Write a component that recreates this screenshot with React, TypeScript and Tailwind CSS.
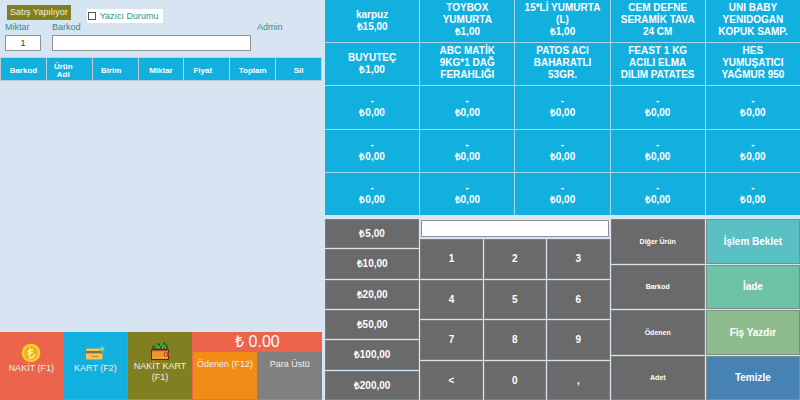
import React, { useState } from "react";

const products: string[][] = [
  ["karpuz", "₺15,00"],
  ["TOYBOX", "YUMURTA", "₺1,00"],
  ["15*Lİ YUMURTA", "(L)", "₺1,00"],
  ["CEM DEFNE", "SERAMİK TAVA", "24 CM"],
  ["UNI BABY", "YENIDOGAN", "KOPUK SAMP."],
  ["BUYUTEÇ", "₺1,00"],
  ["ABC MATİK", "9KG*1 DAĞ", "FERAHLIĞI"],
  ["PATOS ACI", "BAHARATLI", "53GR."],
  ["FEAST 1 KG", "ACILI ELMA", "DILIM PATATES"],
  ["HES", "YUMUŞATICI", "YAĞMUR 950"],
  ...Array.from({ length: 15 }, () => ["-", "₺0,00"]),
];

const notes = ["₺5,00", "₺10,00", "₺20,00", "₺50,00", "₺100,00", "₺200,00"];
const keys = ["1", "2", "3", "4", "5", "6", "7", "8", "9", "<", "0", ","];
const modes = ["Diğer Ürün", "Barkod", "Ödenen", "Adet"];
const actions = [
  { label: "İşlem Beklet", color: "bg-[#5bc0c4]" },
  { label: "İade", color: "bg-[#6fc2a6]" },
  { label: "Fiş Yazdır", color: "bg-[#8fbc8f]" },
  { label: "Temizle", color: "bg-[#4682b4]" },
];
const columns = [
  { name: "Barkod", pad: "px-0" },
  { name: "Ürün Adi", pad: "pl-1 pr-4" },
  { name: "Birim", pad: "pl-1 pr-3" },
  { name: "Miktar", pad: "px-0" },
  { name: "Fiyat", pad: "pl-1 pr-3" },
  { name: "Toplam", pad: "px-0" },
  { name: "Sil", pad: "px-0" },
];

function CoinIcon() {
  return (
    <svg viewBox="0 0 20 20" className="h-5 w-5" aria-hidden="true">
      <circle cx="10" cy="10" r="9.5" fill="#f2a91e" />
      <circle cx="10" cy="9.8" r="8.9" fill="#ffcf33" />
      <circle cx="10" cy="10" r="7" fill="#eeb01c" />
      <path d="M8.7 4.7v10c3.2.2 4.9-1.5 5-4.1M6.3 9l5.6-2.5M6.3 11.6l5.6-2.5" fill="none" stroke="#fff0a8" strokeWidth="1.4" />
    </svg>
  );
}

function CardIcon() {
  return (
    <svg viewBox="0 0 20 14" className="h-[14px] w-5" aria-hidden="true">
      <rect x="1" y="2.5" width="16.5" height="11" rx="1.2" fill="#fbc04d" />
      <path d="M1 5h16.5v2.3H1z" fill="#7a6f55" />
      <path d="M7.5 10.5h6" stroke="#a77b34" strokeWidth="1" strokeDasharray="1.4 .5" />
      <circle cx="17" cy="2.9" r="2.6" fill="#5cc6ad" />
      <path d="M15.7 3l1 1 1.7-2" fill="none" stroke="#e8fff8" strokeWidth=".7" />
    </svg>
  );
}

function WalletIcon() {
  return (
    <svg viewBox="0 0 20 20" className="h-5 w-5" aria-hidden="true">
      <path d="M3 9L2 5l4-1 1-2 4 1 3-2 4 4-1 4z" fill="#24541f" />
      <path d="M4 7l3-3 2 3 3-5 2 4 2-2" fill="none" stroke="#4fa53c" strokeWidth="1.6" />
      <path d="M6 8l2-2M12 8l1-3M15 8l1-2" stroke="#7cc552" strokeWidth="1" />
      <rect x="1" y="8" width="18" height="11" rx="1" fill="#5e2b16" />
      <path d="M2 9h16v9H2z" fill="#ee942f" />
      <path d="M2 9h16v1.2H2z" fill="#bc4d22" />
      <path d="M3 16h14v1H3z" fill="#f9a94b" />
      <path d="M14 11.5h5v3.8h-5z" fill="#a03a25" />
      <circle cx="15.8" cy="13.4" r="1" fill="#ffd77c" />
    </svg>
  );
}

const greyButton =
  "flex items-center justify-center border border-[#7c7c7c] bg-[#6a6a6a] font-bold text-white";

export default function App() {
  const [qty, setQty] = useState("1");
  const [barcode, setBarcode] = useState("");
  const [entry, setEntry] = useState("");
  const [printer, setPrinter] = useState(false);

  return (
    <div className="grid min-h-screen grid-cols-[322fr_475fr] gap-[3px] bg-[#d7e4f2] font-['Liberation_Sans',Arial,sans-serif]">
      <section className="flex min-w-0 flex-col">
        <div className="flex items-start gap-4 pl-[7px] pt-[5px]">
          <span className="bg-[#808022] px-[3px] text-[9px] leading-[15px] text-[#f5f0cf]">Satış Yapılıyor</span>
          <label className="mt-1 flex items-center gap-1 bg-white pl-px pr-1 text-[9px] leading-[14px] text-[#2a9391]">
            <input
              type="checkbox"
              checked={printer}
              onChange={(e) => setPrinter(e.target.checked)}
              className="h-2 w-2 appearance-none border border-[#555] bg-white checked:bg-[#555]"
            />
            Yazıcı Durumu
          </label>
        </div>
        <div className="flex items-start pl-[5px] text-[9px] leading-[8px] text-[#2a9391]">
          <div className="w-[47px]">
            <label htmlFor="qty" className="block pb-1">Miktar</label>
            <input
              id="qty"
              value={qty}
              onChange={(e) => setQty(e.target.value)}
              className="block h-4 w-9 border border-[#919191] bg-white text-center text-[9px] text-[#333] outline-none"
            />
          </div>
          <div className="w-[205px]">
            <label htmlFor="barcode" className="block pb-1">Barkod</label>
            <input
              id="barcode"
              value={barcode}
              onChange={(e) => setBarcode(e.target.value)}
              className="block h-4 w-[199px] border border-[#919191] bg-white px-1 text-[9px] text-[#333] outline-none"
            />
          </div>
          <span>Admin</span>
        </div>
        <table className="mt-[6px] w-full table-fixed border-separate border-spacing-px bg-[#c5cbd0] text-[8px] leading-[8px] text-white">
          <thead>
            <tr className="h-[22px]">
              {columns.map((c) => (
                <th key={c.name} scope="col" className={"bg-[#12b0df] pt-1 text-center align-middle font-bold " + c.pad}>
                  {c.name}
                </th>
              ))}
            </tr>
          </thead>
        </table>
        <div className="flex-1" />
        <div className="grid h-[68px] grid-cols-[63fr_64fr_64fr_130fr] gap-px border-b border-[#9a8a80] bg-[#ec644b] text-[9px] leading-[11px] text-[#f3f0e8]">
          <button className="flex flex-col items-center bg-[#ec644b] pt-[11px]">
            <CoinIcon />
            NAKİT (F1)
          </button>
          <button className="flex flex-col items-center gap-[3px] bg-[#12b0df] pt-[14px]">
            <CardIcon />
            KART (F2)
          </button>
          <button className="flex flex-col items-center bg-[#808022] pt-[9px]">
            <WalletIcon />
            <span>NAKİT KART<br />(F1)</span>
          </button>
          <div className="flex flex-col">
            <output className="h-5 text-center text-[16px] leading-[20px] text-white">₺ 0.00</output>
            <div className="grid flex-1 grid-cols-2">
              <button className="flex justify-center bg-[#f28c16] pt-[7px]">Ödenen (F12)</button>
              <button className="flex justify-center bg-[#808080] pt-[7px]">Para Üstü</button>
            </div>
          </div>
        </div>
      </section>

      <section className="flex min-w-0 flex-col gap-1">
        <div className="grid flex-[215] grid-cols-5 grid-rows-5 gap-px bg-[#a9d8ee]">
          {products.map((lines, i) => (
            <button
              key={i}
              className={
                "flex flex-col items-center justify-center bg-[#12b0df] text-[10px] font-bold leading-[12px] text-white " +
                (lines.length > 2 ? "pb-[3px]" : "pb-0")
              }
            >
              {lines.map((line, j) => (
                <span key={j} className="block whitespace-nowrap">{line}</span>
              ))}
            </button>
          ))}
        </div>
        <div className="grid flex-[181] grid-cols-5 gap-px">
          <div className="grid grid-rows-6 gap-px">
            {notes.map((n) => (
              <button key={n} className={greyButton + " text-[10px] leading-[11px]"}>{n}</button>
            ))}
          </div>
          <div className="col-span-2 flex flex-col gap-[2px]">
            <input
              aria-label="Tutar"
              value={entry}
              onChange={(e) => setEntry(e.target.value)}
              className="mx-px mt-px h-[17px] border border-[#919191] bg-white px-1 text-[10px] outline-none"
            />
            <div className="grid flex-1 grid-cols-3 grid-rows-4 gap-px">
              {keys.map((k) => (
                <button key={k} onClick={() => setEntry(k === "<" ? entry.slice(0, -1) : entry + k)} className={greyButton + " text-[10px] leading-[11px]"}>
                  {k}
                </button>
              ))}
            </div>
          </div>
          <div className="grid grid-rows-4 gap-px">
            {modes.map((m) => (
              <button key={m} className={greyButton + " text-[7px] leading-[9px]"}>{m}</button>
            ))}
          </div>
          <div className="grid grid-rows-4 gap-px">
            {actions.map((a) => (
              <button key={a.label} className={"flex items-center justify-center border border-[#7c8c90] text-[10px] font-bold leading-[11px] text-white " + a.color}>
                {a.label}
              </button>
            ))}
          </div>
        </div>
      </section>
    </div>
  );
}
